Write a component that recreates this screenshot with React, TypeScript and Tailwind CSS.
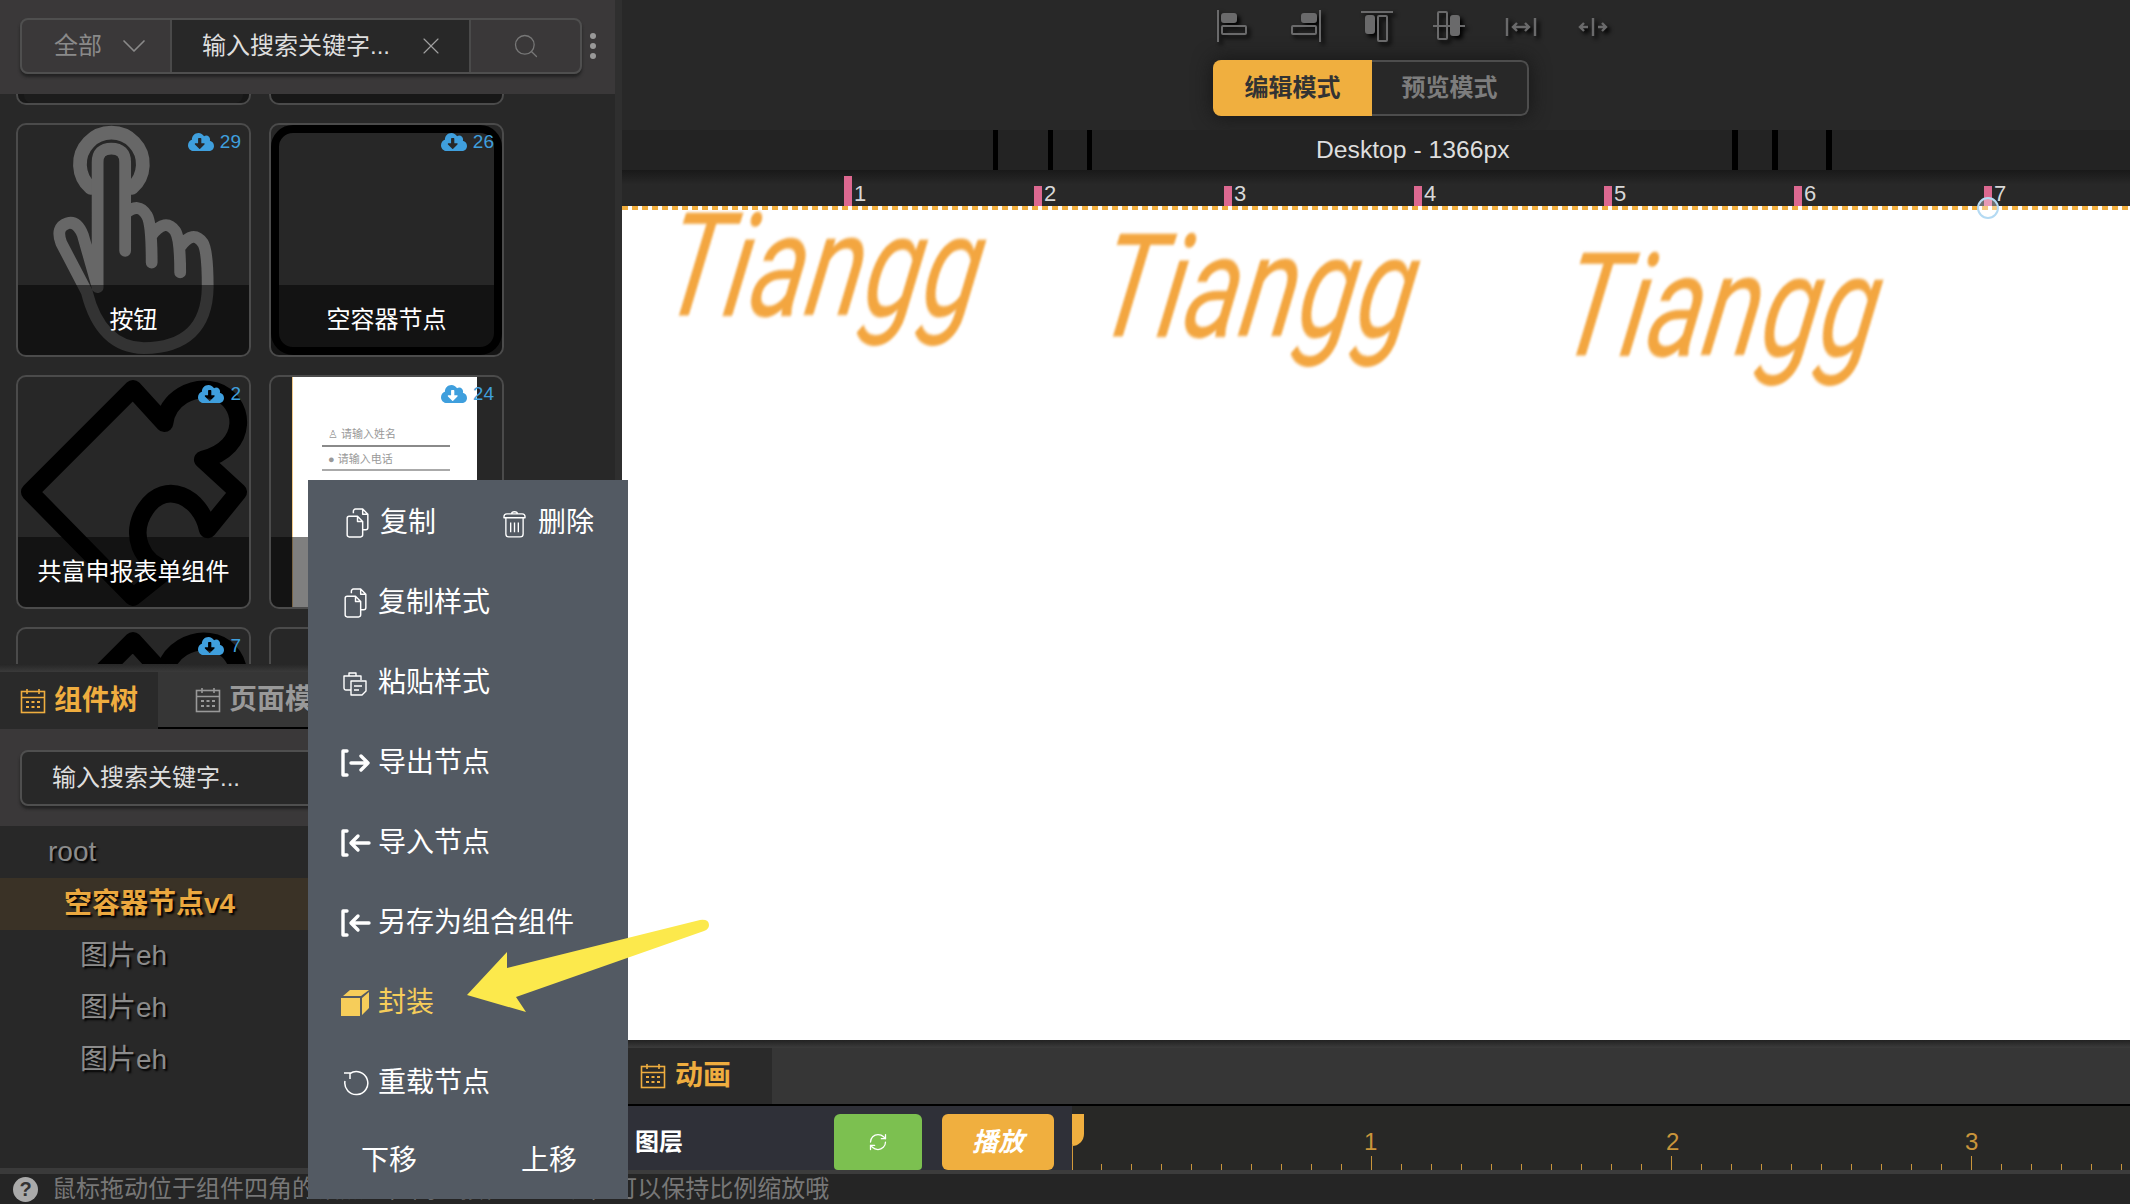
import { ChevronDown, RefreshCw, Search, X } from 'lucide-react';
import { FaCloudDownloadAlt } from 'react-icons/fa';

type CardArt = 'none' | 'hand' | 'frame' | 'puzzle' | 'form' | 'ring' | 'old-a' | 'old-b';

interface CardItem {
  label: string;
  count?: number;
  art: CardArt;
}

const cards: CardItem[] = [
  { label: '', art: 'old-a' },
  { label: '', art: 'old-b' },
  { label: '按钮', count: 29, art: 'hand' },
  { label: '空容器节点', count: 26, art: 'frame' },
  { label: '共富申报表单组件', count: 2, art: 'puzzle' },
  { label: '', count: 24, art: 'form' },
  { label: '', count: 7, art: 'puzzle' },
  { label: '', art: 'ring' },
];

const rulerMarks = [1, 2, 3, 4, 5, 6, 7];
const treeLeaves = ['图片eh', '图片eh', '图片eh'];
const timelineMajors = [1, 2, 3, 4];
const timelineTicks = [0, 1, 2, 3, 4, 5, 6, 7, 8, 9];

function CalendarIcon({ className }: { className: string }) {
  return (
    <svg viewBox="0 0 26 26" className={className} fill="none" stroke="currentColor" strokeWidth="1.6">
      <rect x="1.5" y="3.5" width="23" height="21" />
      <path d="M1.5 9.5h23M7 1v5M19 1v5" />
      <path d="M6 14h3M11.5 14h3M17 14h3M6 19h3M11.5 19h3M17 19h3" strokeWidth="2" />
    </svg>
  );
}

function HandArt() {
  return (
    <svg viewBox="0 0 235 234" className="absolute inset-0 h-full w-full" fill="none" stroke="#676767" strokeLinecap="round" strokeLinejoin="round">
      <path d="M74 64 A32 32 0 1 1 116 64" strokeWidth="14" />
      <path
        d="M81 165 L81 38 Q81 24 95 24 Q109 24 109 38 L109 128 M109 90 Q123 78 131 92 Q136 100 136 140 M136 112 Q150 94 160 108 Q165 116 165 150 M165 124 Q178 106 188 120 Q193 128 193 165 Q192 226 128 227 Q84 226 70 170 L44 120 Q38 104 50 100 Q60 97 66 112 L81 165"
        strokeWidth="12"
      />
    </svg>
  );
}

function PuzzleArt() {
  return (
    <svg viewBox="0 0 235 234" className="absolute inset-0 h-full w-full" fill="none" stroke="#000" strokeWidth="18" strokeLinejoin="round" strokeLinecap="round">
      <path d="M117 12 L149 47 C152 22 178 8 200 14 C232 24 236 72 188 84 L224 117 L193 155 C186 122 150 104 130 134 C112 160 126 190 152 196 L117 224 L12 117 Z" />
    </svg>
  );
}

function FormArt() {
  return (
    <div className="absolute inset-y-0 left-[21px] w-[185px] border-l border-[#f0c98a] bg-white">
      <div className="ml-[29px] mt-[46px] w-[128px] text-[11px] text-[#999]">
        <div className="h-[24px] border-b-2 border-[#8a8a8a] pl-[6px] leading-[22px]">♙ 请输入姓名</div>
        <div className="h-[24px] border-b-2 border-[#aaa] pl-[6px] leading-[24px]">● 请输入电话</div>
      </div>
    </div>
  );
}

function CardArtView({ art }: { art: CardArt }) {
  if (art === 'hand') return <HandArt />;
  if (art === 'puzzle') return <PuzzleArt />;
  if (art === 'form') return <FormArt />;
  if (art === 'frame') return <div className="absolute inset-0 rounded-[22px] border-[8px] border-black" />;
  if (art === 'ring') return <div className="absolute left-[8px] top-[24px] h-[200px] w-[200px] rounded-full border-[18px] border-black" />;
  if (art === 'old-a') return <div className="absolute inset-x-[6px] bottom-0 h-[70px] rounded-b-[8px] bg-[#303030]" />;
  return null;
}

function ComponentCard({ item }: { item: CardItem }) {
  const isOld = item.art === 'old-a' || item.art === 'old-b';
  return (
    <div className="relative h-[234px] w-[235px] overflow-hidden rounded-[10px] border-2 border-[#4b4b4b] bg-[#272727]">
      <CardArtView art={item.art} />
      <div className={`absolute inset-x-0 bottom-0 flex h-[70px] items-center justify-center text-[24px] text-white ${isOld ? 'bg-black/40' : 'bg-black/50'}`}>
        {item.label}
      </div>
      {item.count !== undefined && (
        <div className="absolute right-[8px] top-[5px] flex items-center gap-[6px] text-[19px] leading-[24px] text-[#3f9fdd]">
          <FaCloudDownloadAlt className="h-[24px] w-[26px]" />
          <span>{item.count}</span>
        </div>
      )}
    </div>
  );
}

function SearchBar() {
  return (
    <div className="flex h-[94px] shrink-0 items-start bg-[#3a3839] pl-[20px] pt-[18px]">
      <div className="flex h-[56px] w-[562px] overflow-hidden rounded-[8px] border-2 border-[#4f4f4f] shadow-[0_3px_3px_#222]">
        <div className="flex w-[148px] items-center pl-[32px] text-[24px] text-[#8a8a8a]">
          全部
          <ChevronDown className="ml-[12px] h-[40px] w-[40px] shrink-0" strokeWidth={1} />
        </div>
        <div className="flex w-[301px] items-center border-x-2 border-[#4a4a4a] bg-[#282828] pl-[30px] text-[24px] text-[#dedede]">
          输入搜索关键字...
          <X className="ml-[27px] h-[28px] w-[28px] shrink-0 text-[#a0a0a0]" strokeWidth={1} />
        </div>
        <div className="flex flex-1 items-center justify-center">
          <Search className="h-[28px] w-[28px] text-[#777]" strokeWidth={1.1} />
        </div>
      </div>
      <div className="ml-[8px] mt-[15px] flex flex-col gap-[4px]">
        <span className="h-[6px] w-[6px] rounded-full bg-[#999]" />
        <span className="h-[6px] w-[6px] rounded-full bg-[#999]" />
        <span className="h-[6px] w-[6px] rounded-full bg-[#999]" />
      </div>
    </div>
  );
}

function TreePanel() {
  return (
    <div className="flex h-[510px] shrink-0 flex-col bg-[#282828]">
      <div className="h-[8px] bg-gradient-to-b from-[#262626] to-[#3a3a3a]" />
      <div className="flex h-[57px] bg-[#363636]">
        <div className="flex w-[158px] items-center bg-[#2a2a2a] pl-[20px] text-[28px] font-bold text-[#efad3f]">
          <CalendarIcon className="mr-[8px] h-[26px] w-[26px]" />
          组件树
        </div>
        <div className="flex flex-1 items-center border-b-2 border-black pl-[37px] text-[28px] font-bold text-[#999]">
          <CalendarIcon className="mr-[8px] h-[26px] w-[26px]" />
          页面模板
        </div>
      </div>
      <div className="flex h-[97px] items-center bg-[#3a3839] px-[20px]">
        <div className="flex h-[56px] flex-1 items-center rounded-[8px] border-2 border-[#4f4f4f] bg-[#282828] pl-[30px] text-[24px] text-[#dedede] shadow-[0_3px_3px_#222]">
          输入搜索关键字...
        </div>
      </div>
      <div className="flex-1 text-[28px] [text-shadow:2px_2px_2px_#000]">
        <div className="flex h-[52px] items-center pl-[48px] text-[#8c8c8c]">root</div>
        <div className="flex h-[52px] items-center bg-[#3a3226] pl-[64px] font-bold text-[#eba83f]">空容器节点v4</div>
        {treeLeaves.map((leaf, i) => (
          <div key={i} className="flex h-[52px] items-center pl-[80px] text-[#8c8c8c]">
            {leaf}
          </div>
        ))}
      </div>
      <div className="h-[6px] bg-[#3a3a3a]" />
    </div>
  );
}

function AlignIcons() {
  const cls = 'h-[34px] w-[34px] fill-none stroke-[#6a6a6b] [filter:drop-shadow(3px_3px_2px_#000)]';
  return (
    <div className="flex h-[60px] items-start gap-[38px] pl-[594px] pt-[9px]">
      <svg viewBox="0 0 34 34" className={cls} strokeWidth="2">
        <path d="M2 1v32" />
        <rect x="6" y="5" width="14" height="8" rx="2" fill="#6a6a6b" />
        <rect x="6" y="17" width="24" height="8" rx="1" />
      </svg>
      <svg viewBox="0 0 34 34" className={cls} strokeWidth="2">
        <path d="M32 1v32" />
        <rect x="14" y="5" width="14" height="8" rx="2" fill="#6a6a6b" />
        <rect x="4" y="17" width="24" height="8" rx="1" />
      </svg>
      <svg viewBox="0 0 34 34" className={cls} strokeWidth="2">
        <path d="M1 3h32" />
        <rect x="6" y="7" width="8" height="17" rx="2" fill="#6a6a6b" />
        <rect x="18" y="7" width="9" height="25" rx="1" />
      </svg>
      <svg viewBox="0 0 34 34" className={cls} strokeWidth="2">
        <path d="M1 17h32" />
        <rect x="6" y="3" width="9" height="27" rx="1" />
        <rect x="19" y="7" width="8" height="19" rx="2" fill="#6a6a6b" />
      </svg>
      <svg viewBox="0 0 34 34" className={cls} strokeWidth="2.4">
        <path d="M3 9v18M31 9v18M9 18h16M13 14l-4 4 4 4M21 14l4 4-4 4" />
      </svg>
      <svg viewBox="0 0 34 34" className={cls} strokeWidth="2.4">
        <path d="M17 9v18M4 18h8M8 14l-4 4 4 4M22 18h8M26 14l4 4-4 4" />
      </svg>
    </div>
  );
}

function Workspace() {
  const logoText =
    "absolute origin-top-left font-['Roboto',sans-serif] text-[104px] italic leading-[80px] text-[#f3a640] blur-[1px] [transform:scale(1.03,1.38)_skewX(-13deg)]";
  return (
    <div className="flex min-w-0 flex-1 flex-col bg-[#282828]">
      <div className="h-[130px] shrink-0 bg-[#282828]">
        <AlignIcons />
        <div className="ml-[591px] flex h-[56px] w-[316px] overflow-hidden rounded-[8px] shadow-[0_0_20px_#151515]">
          <div className="flex w-[159px] items-center justify-center bg-[#f0af3f] text-[24px] font-bold text-[#333]">编辑模式</div>
          <div className="flex flex-1 items-center justify-center rounded-r-[8px] border-2 border-l-0 border-[#4d4d4d] text-[24px] font-bold text-[#7d7d7d]">
            预览模式
          </div>
        </div>
      </div>
      <div className="relative flex h-[40px] shrink-0 items-center bg-[#232323] pl-[694px] text-[24.7px] text-[#dedede]">
        Desktop - 1366px
        <span className="absolute inset-y-0 left-[371px] w-[5px] bg-black" />
        <span className="absolute inset-y-0 left-[426px] w-[5px] bg-black" />
        <span className="absolute inset-y-0 left-[465px] w-[5px] bg-black" />
        <span className="absolute inset-y-0 left-[1110px] w-[6px] bg-black" />
        <span className="absolute inset-y-0 left-[1150px] w-[6px] bg-black" />
        <span className="absolute inset-y-0 left-[1204px] w-[6px] bg-black" />
      </div>
      <div className="flex h-[36px] shrink-0 items-end bg-gradient-to-b from-[#191919] to-[#282828] to-40% pl-[222px] text-[22px] leading-[24px] text-[#d8d8d8]">
        {rulerMarks.map(mark => (
          <div key={mark} className="flex w-[190px] shrink-0 items-end gap-[2px]">
            <span className={`w-[8px] bg-[#dc6890] ${mark === 1 ? 'h-[30px]' : 'h-[20px]'}`} />
            <span>{mark}</span>
          </div>
        ))}
      </div>
      <div className="relative min-h-0 flex-1 bg-white">
        <div className="h-[4px] bg-[repeating-linear-gradient(90deg,#f0ae3f_0,#f0ae3f_6px,#fff_6px,#fff_10px)]" />
        <span className={`${logoText} left-[54px] top-[6px]`}>Tiangg</span>
        <span className={`${logoText} left-[488px] top-[27px]`}>Tiangg</span>
        <span className={`${logoText} left-[951px] top-[46px]`}>Tiangg</span>
      </div>
      <div className="h-[8px] shrink-0 bg-gradient-to-b from-[#222] to-[#3c3c3c]" />
      <div className="flex h-[58px] shrink-0 border-b-2 border-black bg-[#363636]">
        <div className="flex w-[150px] items-center bg-[#2a2a2a] pl-[18px] text-[28px] font-bold text-[#efad3f]">
          <CalendarIcon className="mr-[9px] h-[26px] w-[26px]" />
          动画
        </div>
      </div>
      <div className="flex h-[64px] shrink-0">
        <div className="flex w-[450px] items-end bg-[#2f3038] pl-[13px]">
          <div className="flex h-[56px] w-[199px] items-center text-[24px] font-bold text-white">图层</div>
          <div className="flex h-[56px] w-[88px] items-center justify-center rounded-t-[6px] rounded-b-[4px] bg-[#7cc050]">
            <RefreshCw className="h-[20px] w-[20px] text-white" strokeWidth={1.5} />
          </div>
          <div className="ml-[20px] flex h-[56px] w-[112px] items-center justify-center rounded-[6px] bg-[#f0af3f] text-[26px] font-bold italic text-white">
            播放
          </div>
        </div>
        <div className="relative flex flex-1 items-end overflow-hidden bg-[#282826]">
          <span className="absolute left-0 top-[8px] h-[32px] w-[12px] rounded-br-[12px] bg-[#f0af3f]" />
          <span className="absolute bottom-0 left-0 h-[26px] w-px bg-[#d39a3a]" />
          {timelineMajors.map(major => (
            <div key={major} className="flex w-[300px] shrink-0 items-end">
              {timelineTicks.map(t => (
                <span key={t} className="flex w-[30px] shrink-0 justify-end">
                  <span className={`w-px bg-[#c9953b] ${t === 9 ? 'h-[14px]' : 'h-[6px]'}`} />
                </span>
              ))}
            </div>
          ))}
          <span className="absolute left-[292px] top-[24px] text-[24px] leading-[24px] text-[#c9953b]">1</span>
          <span className="absolute left-[594px] top-[24px] text-[24px] leading-[24px] text-[#c9953b]">2</span>
          <span className="absolute left-[893px] top-[24px] text-[24px] leading-[24px] text-[#c9953b]">3</span>
        </div>
      </div>
      <div className="h-[4px] shrink-0 bg-[#3c3c3c]" />
    </div>
  );
}

function MenuIconCopy() {
  return (
    <svg viewBox="0 0 24 30" className="ml-[2px] h-[31px] w-[25px]" fill="none" stroke="#fff" strokeWidth="1.4" strokeLinejoin="round">
      <path d="M2 10a2 2 0 0 1 2-2h8l5 5v13a2 2 0 0 1-2 2H4a2 2 0 0 1-2-2zM12 8v5h5" />
      <path d="M8 5V3a2 2 0 0 1 2-2h7l5 5v13a2 2 0 0 1-2 2h-3M17 1v5h5" />
    </svg>
  );
}

function MenuIconPaste() {
  return (
    <svg viewBox="0 0 24 26" className="ml-[2px] h-[26px] w-[24px]" fill="none" stroke="#fff" strokeWidth="1.4" strokeLinejoin="round">
      <path d="M8 20H3a2 2 0 0 1-2-2V6h17v4M6 6V3h7v3" />
      <path d="M8 11h15v10l-4 4H8zM11 16h8M11 20h5" />
    </svg>
  );
}

function MenuIconBracketArrow({ direction }: { direction: 'in' | 'out' }) {
  return (
    <svg viewBox="0 0 30 28" className="h-[28px] w-[30px]" fill="none" stroke="#fff" strokeWidth="3.4" strokeLinecap="round" strokeLinejoin="round">
      <path d="M6 2H2v24h4" />
      {direction === 'out' ? <path d="M10 14h17M20 7l7 7-7 7" /> : <path d="M28 14H11M17 7l-7 7 7 7" />}
    </svg>
  );
}

function MenuRow({ icon, label, gold }: { icon: React.ReactNode; label: string; gold?: boolean }) {
  return (
    <div className={`flex h-[80px] items-center pl-[33px] text-[28px] ${gold ? 'text-[#f6cd5a]' : 'text-white'}`}>
      <span className="flex w-[37px] shrink-0">{icon}</span>
      {label}
    </div>
  );
}

function ContextMenu() {
  return (
    <div className="absolute left-[308px] top-[480px] h-[719px] w-[320px] bg-[#535a63] pt-[3px]">
      <div className="flex h-[80px] items-center pl-[35px] text-[28px] text-white">
        <span className="flex w-[37px] shrink-0">
          <MenuIconCopy />
        </span>
        <span className="w-[123px]">复制</span>
        <span className="flex w-[35px] shrink-0">
          <svg viewBox="0 0 24 30" className="h-[29px] w-[23px]" fill="none" stroke="#fff" strokeWidth="1.4" strokeLinejoin="round">
            <path d="M1 8c0-2 1-3 3-3h16c2 0 3 1 3 3v1H1zM9 5c0-3 6-3 6 0M3 9v17a3 3 0 0 0 3 3h12a3 3 0 0 0 3-3V9M8 14v10M12 14v10M16 14v10" />
          </svg>
        </span>
        删除
      </div>
      <MenuRow icon={<MenuIconCopy />} label="复制样式" />
      <MenuRow icon={<MenuIconPaste />} label="粘贴样式" />
      <MenuRow icon={<MenuIconBracketArrow direction="out" />} label="导出节点" />
      <MenuRow icon={<MenuIconBracketArrow direction="in" />} label="导入节点" />
      <MenuRow icon={<MenuIconBracketArrow direction="in" />} label="另存为组合组件" />
      <MenuRow
        gold
        label="封装"
        icon={
          <svg viewBox="0 0 28 26" className="h-[26px] w-[28px]" fill="#f6cd5a">
            <path d="M0 8h19v18H0zM2 6l7-6h19l-8 6zM21 8l7-6v16l-7 7z" />
          </svg>
        }
      />
      <MenuRow
        label="重载节点"
        icon={
          <svg viewBox="0 0 26 26" className="ml-[2px] h-[26px] w-[26px]" fill="none" stroke="#fff" strokeWidth="1.5">
            <path d="M7 3.5A11.5 11.5 0 1 1 2 11M7 9V3H1" />
          </svg>
        }
      />
      <div className="flex h-[76px] items-center pl-[53px] text-[28px] text-white">
        <span className="w-[160px]">下移</span>
        上移
      </div>
    </div>
  );
}

function PointerArrow() {
  return (
    <svg viewBox="0 0 260 100" className="absolute left-[460px] top-[915px] h-[100px] w-[260px]" fill="#fce94c">
      <path d="M7 80 L47 37 L47 53 L240 5 Q249 4 249 10 Q249 14 244 16 L56 82 L66 97 Z" />
    </svg>
  );
}

export default function App() {
  return (
    <div className="relative flex h-[1204px] w-[2130px] flex-col overflow-hidden bg-[#252525] font-['Liberation_Sans','Noto_Sans_CJK_SC',sans-serif]">
      <div className="flex min-h-0 flex-1">
        <div className="flex w-[622px] shrink-0 flex-col border-r-[7px] border-[#2f2f2f] bg-[#282828]">
          <SearchBar />
          <div className="min-h-0 flex-1 overflow-hidden">
            <div className="-mt-[223px] grid grid-cols-[235px_235px] gap-[18px] pl-[16px]">
              {cards.map((item, i) => (
                <ComponentCard key={i} item={item} />
              ))}
            </div>
          </div>
          <TreePanel />
        </div>
        <Workspace />
      </div>
      <div className="flex h-[30px] shrink-0 items-center overflow-hidden whitespace-nowrap bg-[#252525] pl-[13px] text-[24px] text-[#777]">
        <span className="mr-[14px] flex h-[25px] w-[25px] shrink-0 items-center justify-center rounded-full bg-[#aaa] text-[20px] font-bold text-[#333]">?</span>
        鼠标拖动位于组件四角的锚点时，同时按住 shift 键，可以保持比例缩放哦
      </div>
      <ContextMenu />
      <PointerArrow />
      <span className="absolute left-[1977px] top-[197px] h-[22px] w-[22px] rounded-full border-2 border-[#b4daf3] bg-[#ffffff55]" />
    </div>
  );
}
